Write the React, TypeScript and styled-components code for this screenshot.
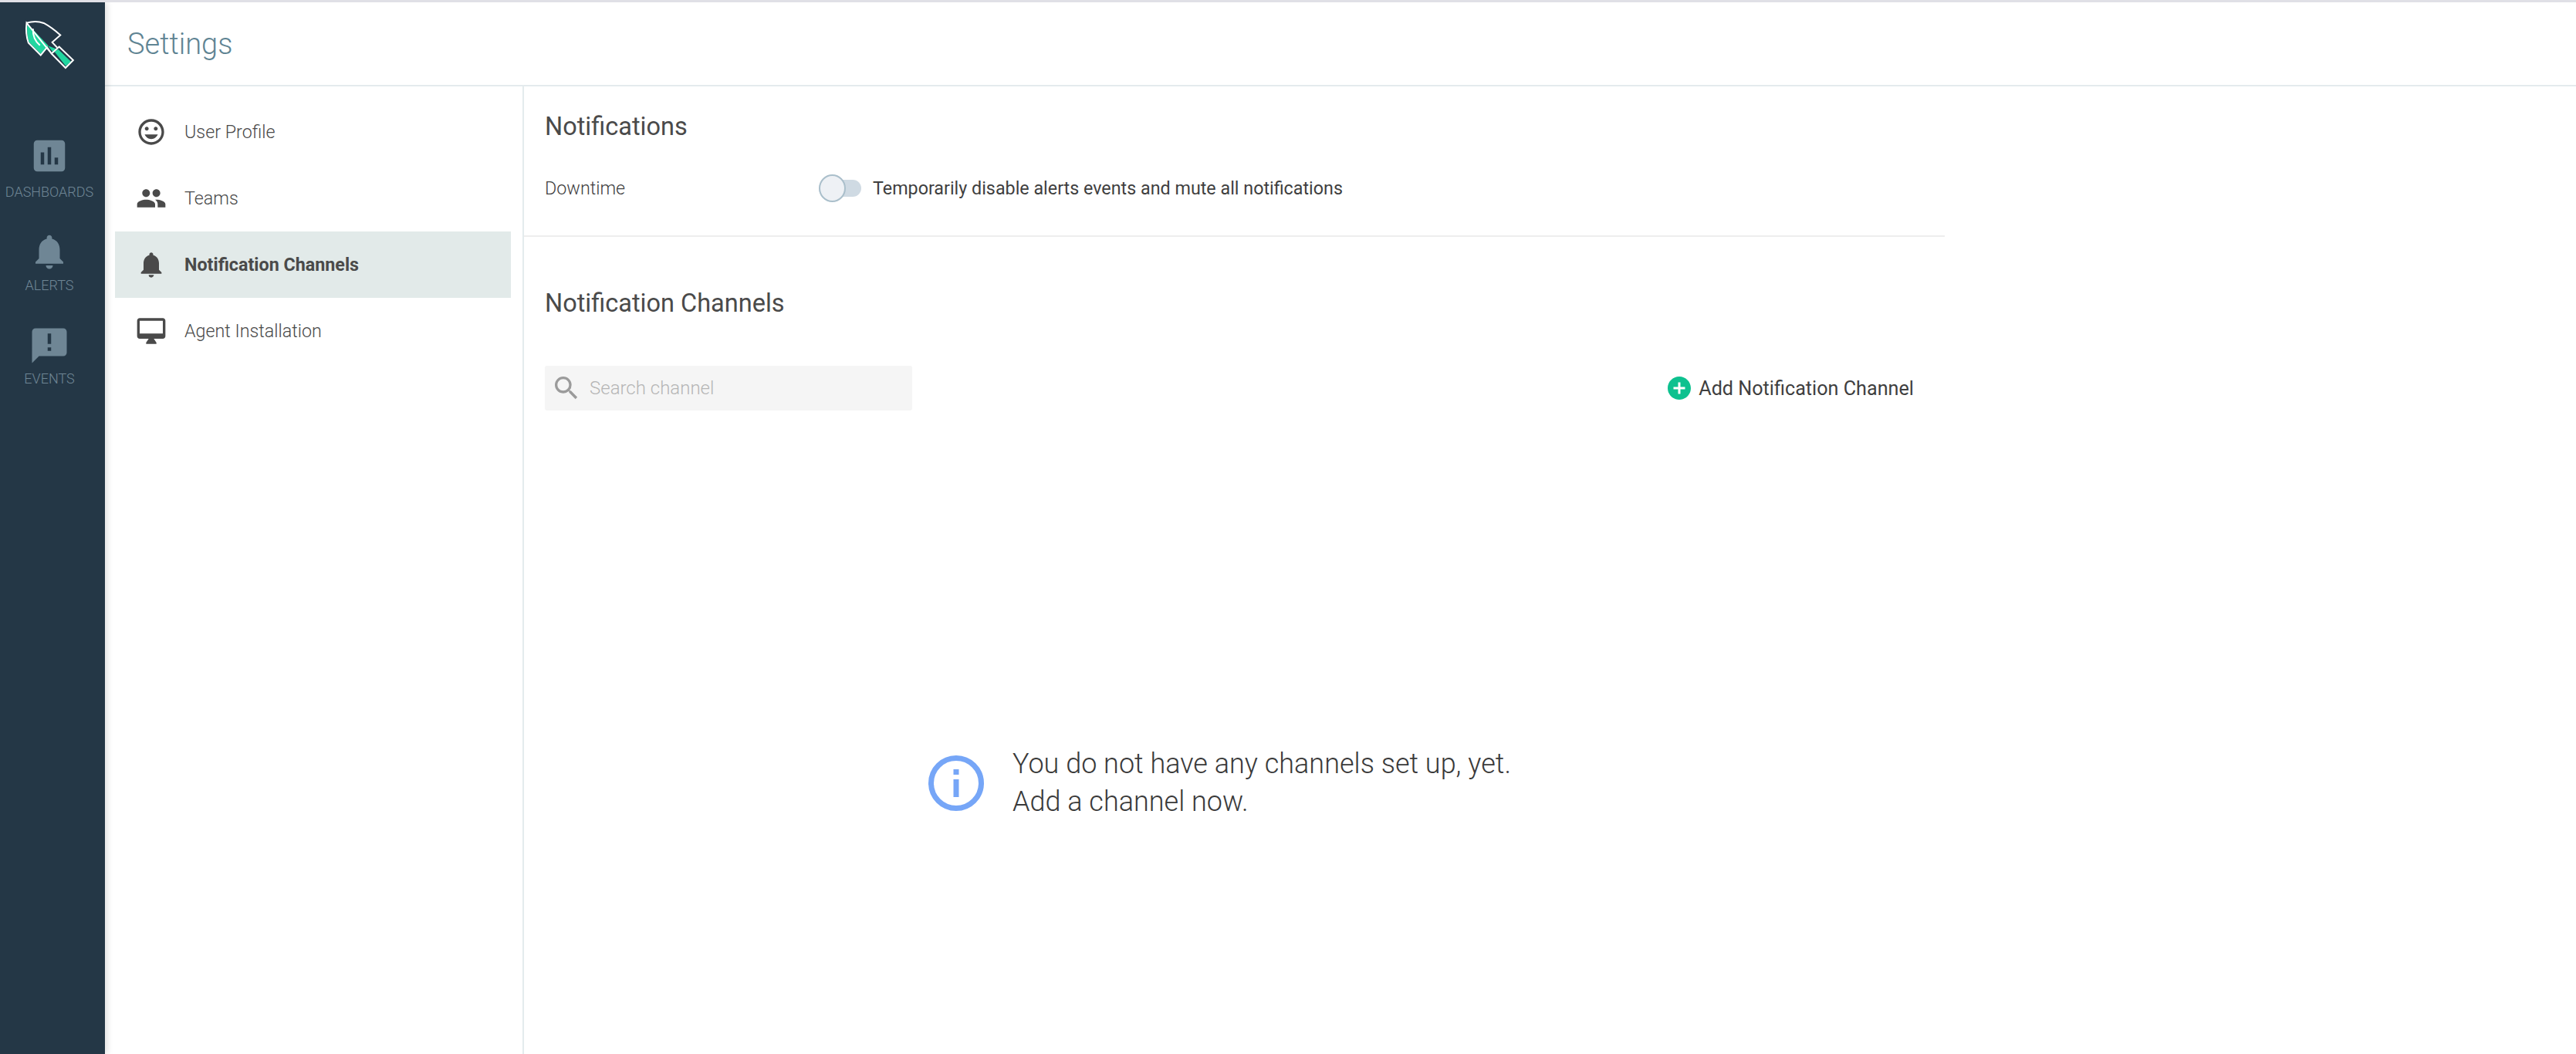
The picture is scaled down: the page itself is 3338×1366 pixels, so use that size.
import styled, { createGlobalStyle } from 'styled-components';
import { MdAddCircle, MdAnnouncement, MdAssessment, MdNotifications, MdPeople, MdSearch, MdTagFaces } from 'react-icons/md';
import type { IconType } from 'react-icons';

const GlobalStyle = createGlobalStyle`
  html, body {
    margin: 0;
    padding: 0;
    background: #fff;
    font-family: Roboto, "Noto Sans", sans-serif;
  }
  * {
    box-sizing: border-box;
  }
`;

const Page = styled.div`
  width: 3338px;
  height: 1366px;
  display: flex;
  flex-direction: column;
  overflow: hidden;
  border-top: 3px solid #e0e0e6;
`;

const Body = styled.div`
  flex: 1;
  display: flex;
  min-height: 0;
`;

const Sidebar = styled.nav`
  width: 136px;
  flex: none;
  padding-right: 8px;
  background: #243746;
  display: flex;
  flex-direction: column;
  align-items: center;
  box-shadow: 3px 0 8px rgba(0, 0, 0, 0.12);
  z-index: 1;
`;

const Logo = styled.svg`
  width: 70px;
  height: 68px;
  margin-top: 21px;
  margin-bottom: 82px;
  margin-left: 2px;
`;

const SideItem = styled.a<{ $iconShift: number }>`
  height: 121px;
  display: flex;
  flex-direction: column;
  align-items: center;
  color: #6f8695;
  font-size: 18px;
  font-weight: 300;
  line-height: 22px;
  svg {
    display: block;
    margin-top: ${(props) => props.$iconShift + 1}px;
    margin-bottom: ${(props) => 9 - props.$iconShift}px;
  }
`;

const Main = styled.div`
  flex: 1;
  min-width: 0;
  display: flex;
  flex-direction: column;
`;

const Header = styled.header`
  height: 109px;
  flex: none;
  padding-left: 29px;
  display: flex;
  align-items: center;
  border-bottom: 2px solid #e4ebed;
`;

const PageTitle = styled.h1`
  margin: 0;
  font-size: 38px;
  font-weight: 300;
  color: #5f8493;
`;

const Columns = styled.div`
  flex: 1;
  display: flex;
  min-height: 0;
`;

const Menu = styled.aside`
  width: 543px;
  flex: none;
  padding: 16px 15px 0 13px;
  border-right: 2px solid #e4ebed;
`;

const MenuItem = styled.a<{ $active?: boolean }>`
  height: 86px;
  display: flex;
  align-items: center;
  gap: 23px;
  padding-left: 27px;
  color: #4a4a4a;
  font-size: 23.3px;
  font-weight: ${(props) => (props.$active ? 700 : 300)};
  background: ${(props) => (props.$active ? '#e2eae9' : 'transparent')};
`;

const Panel = styled.main`
  width: 1841px;
  flex: none;
`;

const Section = styled.section`
  padding: 0 27px;
  height: 195px;
  border-bottom: 2px solid #eeeeee;
`;

const SectionTitle = styled.h2`
  margin: 0;
  font-size: 32.5px;
  font-weight: 400;
  line-height: 40px;
  color: #4a4a4a;
`;

const NotifHead = styled(SectionTitle)`
  padding-top: 32px;
`;

const DowntimeRow = styled.div`
  display: flex;
  align-items: center;
  margin-top: 40px;
  height: 40px;
  font-size: 23.3px;
  color: #3f3f3f;
`;

const DowntimeLabel = styled.span`
  width: 355px;
  font-weight: 300;
`;

const Toggle = styled.span`
  position: relative;
  width: 55px;
  height: 22px;
  margin-right: 15px;
  border-radius: 11px;
  background: #cfdae3;
`;

const ToggleKnob = styled.span`
  position: absolute;
  left: 0;
  top: -7px;
  width: 35px;
  height: 36px;
  border-radius: 50%;
  background: #eef1f5;
  border: 2px solid #aabfcb;
`;

const DowntimeText = styled.span`
  font-weight: 400;
`;

const ChannelsSection = styled.section`
  padding: 0 40px 0 27px;
`;

const ChannelsHead = styled(SectionTitle)`
  padding-top: 66px;
`;

const Toolbar = styled.div`
  display: flex;
  justify-content: space-between;
  align-items: center;
  margin-top: 61px;
`;

const SearchBox = styled.div`
  width: 476px;
  height: 58px;
  display: flex;
  align-items: center;
  gap: 8px;
  padding-left: 8px;
  background: #f5f5f5;
  border-radius: 3px;
  color: #9b9b9b;
`;

const SearchInput = styled.input`
  border: 0;
  outline: 0;
  flex: 1;
  min-width: 0;
  padding: 0 0 0 2px;
  background: transparent;
  font-family: inherit;
  font-size: 24px;
  font-weight: 300;
  &::placeholder {
    color: #b5b5b5;
    opacity: 1;
  }
`;

const AddButton = styled.a`
  display: flex;
  align-items: center;
  gap: 7px;
  font-size: 25.2px;
  color: #3f3f3f;
  svg {
    color: #0dc18f;
  }
`;

const EmptyState = styled.div`
  display: flex;
  align-items: center;
  gap: 37px;
  margin-top: 434px;
  padding-left: 497px;
`;

const EmptyText = styled.p`
  margin: 0;
  font-size: 36px;
  font-weight: 300;
  line-height: 49px;
  color: #3a3a3a;
`;

interface INavItem {
  label: string;
  icon: IconType;
  active?: boolean;
}

// react-icons draws the md monitor with a filled screen, the reference has it hollow
const DesktopIcon: IconType = ({ size }) => (
  <svg width={size} height={size} viewBox="0 0 24 24" fill="currentColor">
    <path
      fillRule="evenodd"
      d="M21 2H3c-1.1 0-2 .9-2 2v12c0 1.1.9 2 2 2h7l-2 3v1h8v-1l-2-3h7c1.1 0 2-.9 2-2V4c0-1.1-.9-2-2-2zm0 12H3V4h18v10z"
    />
  </svg>
);

const sideItems = [
  { label: 'DASHBOARDS', icon: MdAssessment, iconShift: 0 },
  { label: 'ALERTS', icon: MdNotifications, iconShift: 3 },
  { label: 'EVENTS', icon: MdAnnouncement, iconShift: 4 },
];

const menuItems: INavItem[] = [
  { label: 'User Profile', icon: MdTagFaces },
  { label: 'Teams', icon: MdPeople },
  { label: 'Notification Channels', icon: MdNotifications, active: true },
  { label: 'Agent Installation', icon: DesktopIcon },
];

function ShovelLogo() {
  return (
    <Logo viewBox="90 70 210 205" fill="none">
      <path d="M106 90 L188 176 L158 208 L112 162 Q102 130 106 90 Z" fill="#22d6a0" />
      <path d="M186 176 L222 190 L208 204 Z" fill="#22d6a0" />
      <path d="M212 200 L226 190 L276 238 L256 256 Z" fill="#22d6a0" />
      <path d="M128 110 Q126 150 155 175" stroke="#fff" strokeWidth="6" />
      <path
        d="M103 87 Q140 76 170 88 Q200 104 235 135 L203 163 L222 183 M230 180 L285 233 L255 263 L200 207 Z M200 207 L183 183 L158 213 L110 165 Q98 130 103 87 Z"
        stroke="#fff"
        strokeWidth="6"
        strokeLinejoin="miter"
      />
    </Logo>
  );
}

function InfoIcon() {
  return (
    <svg width="72" height="72" viewBox="0 0 72 72">
      <circle cx="36" cy="36" r="32.5" fill="none" stroke="#76a6f7" strokeWidth="7" />
      <rect x="32.5" y="18" width="7" height="7" fill="#76a6f7" />
      <rect x="32.5" y="31" width="7" height="23" fill="#76a6f7" />
    </svg>
  );
}

export default function App() {
  return (
    <>
      <GlobalStyle />
      <Page>
        <Body>
          <Sidebar>
            <ShovelLogo />
            {sideItems.map((item) => (
              <SideItem key={item.label} $iconShift={item.iconShift}>
                <item.icon size={54} />
                {item.label}
              </SideItem>
            ))}
          </Sidebar>
          <Main>
            <Header>
              <PageTitle>Settings</PageTitle>
            </Header>
            <Columns>
              <Menu>
                {menuItems.map((item) => (
                  <MenuItem key={item.label} $active={item.active}>
                    <item.icon size={40} />
                    {item.label}
                  </MenuItem>
                ))}
              </Menu>
              <Panel>
                <Section>
                  <NotifHead>Notifications</NotifHead>
                  <DowntimeRow>
                    <DowntimeLabel>Downtime</DowntimeLabel>
                    <Toggle>
                      <ToggleKnob />
                    </Toggle>
                    <DowntimeText>Temporarily disable alerts events and mute all notifications</DowntimeText>
                  </DowntimeRow>
                </Section>
                <ChannelsSection>
                  <ChannelsHead>Notification Channels</ChannelsHead>
                  <Toolbar>
                    <SearchBox>
                      <MdSearch size={40} />
                      <SearchInput placeholder="Search channel" />
                    </SearchBox>
                    <AddButton>
                      <MdAddCircle size={36} />
                      Add Notification Channel
                    </AddButton>
                  </Toolbar>
                  <EmptyState>
                    <InfoIcon />
                    <EmptyText>
                      You do not have any channels set up, yet.
                      <br />
                      Add a channel now.
                    </EmptyText>
                  </EmptyState>
                </ChannelsSection>
              </Panel>
            </Columns>
          </Main>
        </Body>
      </Page>
    </>
  );
}
